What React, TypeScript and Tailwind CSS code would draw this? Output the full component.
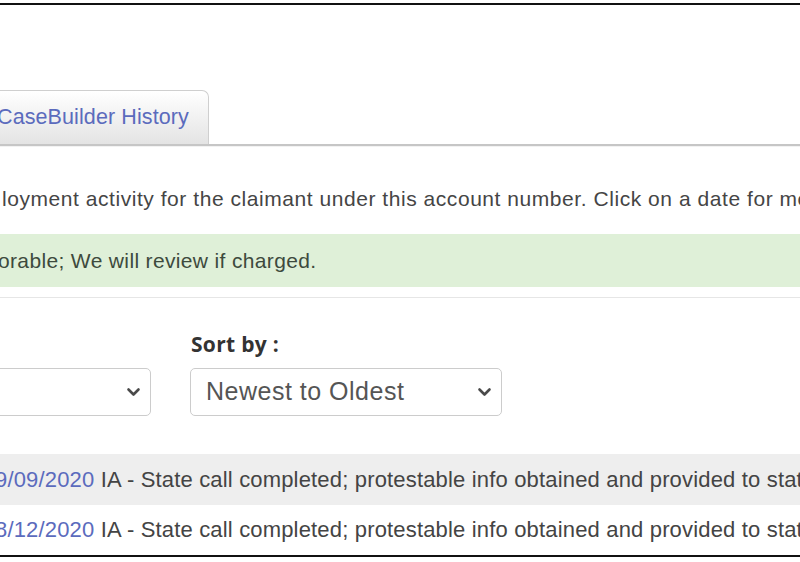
import React from "react";

function Chevron() {
  return (
    <svg width="15" height="10" viewBox="0 0 15 10" className="shrink-0">
      <path d="M2.5 2.5 L7.5 7.5 L12.5 2.5" fill="none" stroke="#4a4a4a" strokeWidth="2.6" strokeLinecap="round" strokeLinejoin="round" />
    </svg>
  );
}

export default function App() {
  return (
    <div
      className="w-[800px] h-[562px] bg-white overflow-hidden"
      style={{ fontFamily: '"Liberation Sans", Arial, sans-serif' }}
    >
      <div className="mt-[3px] h-[554px] border-y-2 border-[#111] flex flex-col overflow-hidden">
        <div className="h-[86px] shrink-0" />
        {/* tabs */}
        <div className="flex items-end h-[55px] shrink-0 border-b-2 border-[#c6c6c6]">
          <div className="ml-[-12px] h-[54px] w-[221px] rounded-tr-[7px] border border-b-0 border-[#cfcfcf] bg-gradient-to-b from-white to-[#e4e4e4] flex items-center pl-[8px]">
            <span className="text-[21.5px] tracking-[0.1px] text-[#5b6bbd] leading-none">CaseBuilder History</span>
          </div>
          <div className="flex-1" />
        </div>
        <div className="h-px bg-[#f2f2f2] shrink-0" />
        {/* description */}
        <div className="h-[87px] shrink-0 pt-[40px] whitespace-nowrap">
          <p className="ml-[2px] text-[21px] tracking-[0.55px] leading-[24px] text-[#454545]">
            loyment activity for the claimant under this account number. Click on a date for more details.
          </p>
        </div>
        {/* alert */}
        <div className="h-[53px] shrink-0 bg-[#dff0d8] flex items-center whitespace-nowrap">
          <span className="ml-[-2px] text-[21px] tracking-[0.35px] text-[#3d4a3d]">orable; We will review if charged.</span>
        </div>
        <div className="h-[10px] shrink-0" />
        <div className="h-px bg-[#e6e6e6] shrink-0" />
        {/* filters */}
        <div className="flex gap-[39px] ml-[-40px] mt-[34px] shrink-0">
          <div className="flex flex-col w-[191px]">
            <div className="h-[24px]" />
            <div className="mt-[12px] h-[48px] rounded-[5px] border border-[#cccccc] bg-white flex items-center justify-end pr-[9px]">
              <Chevron />
            </div>
          </div>
          <div className="flex flex-col w-[312px]">
            <div
              className="h-[24px] leading-[24px] text-[21px] tracking-[0.3px] font-bold text-[#333] pl-[1px] whitespace-nowrap"
              style={{ fontFamily: '"Open Sans", sans-serif' }}
            >
              Sort by :
            </div>
            <div className="mt-[12px] h-[48px] rounded-[5px] border border-[#cccccc] bg-white flex items-center justify-between pl-[15px] pr-[9px]">
              <span className="text-[25px] tracking-[0.5px] text-[#555] whitespace-nowrap">Newest to Oldest</span>
              <Chevron />
            </div>
          </div>
        </div>
        {/* rows */}
        <div className="mt-[38px] flex flex-col whitespace-nowrap">
          <div className="h-[51px] bg-[#eeeeee] flex items-center">
            <span className="ml-[-5px] text-[22px] tracking-[0.17px] text-[#444]">
              <span className="text-[#5b6bbd]">9/09/2020</span> IA - State call completed; protestable info obtained and provided to state.
            </span>
          </div>
          <div className="h-[49px] bg-white flex items-center">
            <span className="ml-[-5px] text-[22px] tracking-[0.17px] text-[#444]">
              <span className="text-[#5b6bbd]">8/12/2020</span> IA - State call completed; protestable info obtained and provided to state.
            </span>
          </div>
        </div>
      </div>
    </div>
  );
}
